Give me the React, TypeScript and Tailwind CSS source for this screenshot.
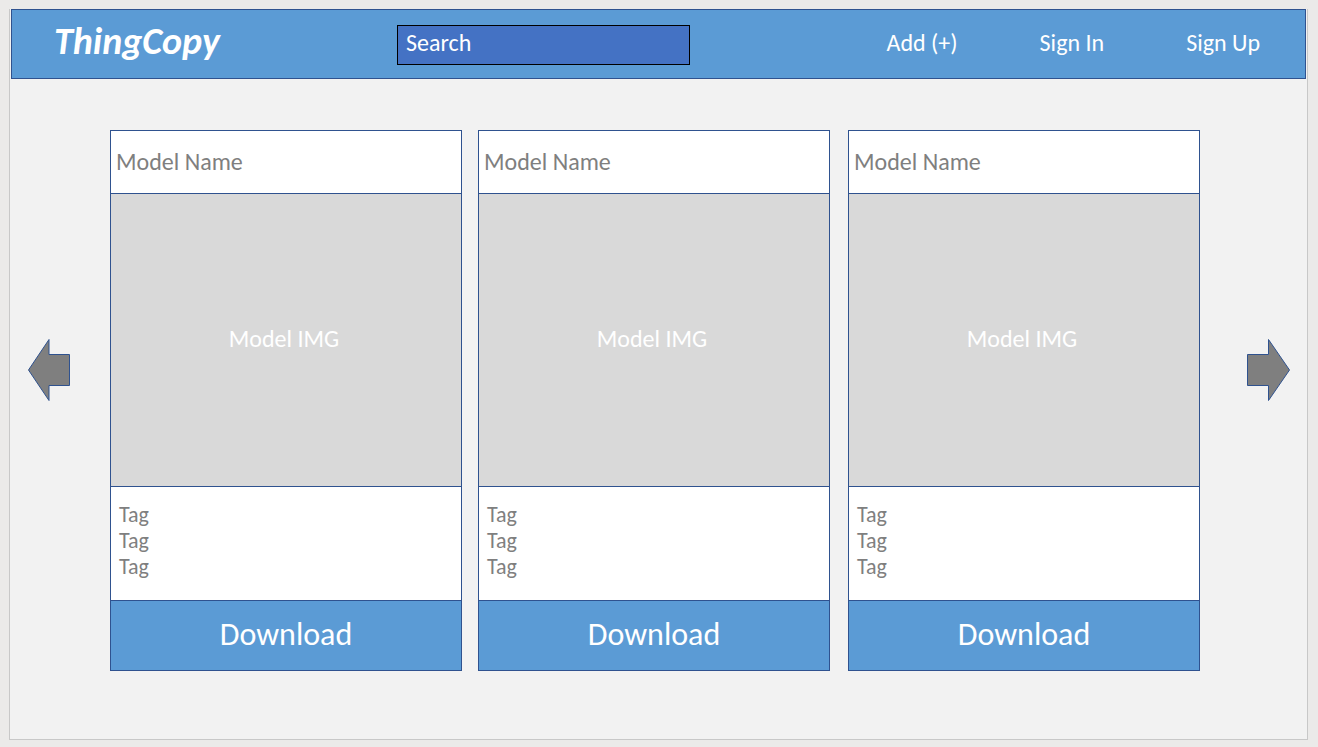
const models = [{ id: 1, gap: "" }, { id: 2, gap: "ml-4" }, { id: 3, gap: "ml-[18px]" }];
const tags = ["Tag", "Tag", "Tag"];

function Arrow({ direction }: { direction: "left" | "right" }) {
  return (
    <svg viewBox="0 0 44 66" className="block w-[44px] h-[66px]" aria-hidden="true">
      <path
        d={direction === "left" ? "M1.5 33 22 2.500V17.500H42.500V48.500H22V63.500Z" : "M43.500 33 22.500 2.500V17.500H1.500V48.500H22.500V63.500Z"}
        fill="#7f7f7f"
        stroke="#2f528f"
        strokeWidth="1"
      />
    </svg>
  );
}

function ModelCard({ gap }: { gap: string }) {
  return (
    <article className={`flex flex-1 flex-col ${gap}`}>
      <div className="border border-[#2f528f] bg-white">
        <h2 className="flex h-[62px] items-center px-[5px] text-[24px] text-[#7f7f7f]">Model Name</h2>
        <div className="flex h-[294px] items-center justify-center border-y border-[#2f528f] bg-[#d9d9d9] pr-1 pb-0.5 text-[24px] text-white">
          Model IMG
        </div>
        <ul className="h-[113px] px-2 pt-[15px] text-[22px] leading-[26px] text-[#7f7f7f]">
          {tags.map((tag, i) => <li key={i}>{tag}</li>)}
        </ul>
      </div>
      <button type="button" className="-mt-px h-[71px] border border-[#2f528f] bg-[#5b9bd5] pb-0.5 text-[32px] text-white">
        Download
      </button>
    </article>
  );
}

export default function App() {
  return (
    <div className="min-h-screen bg-[#ebeae9] pt-[9px] pr-[10px] pb-[7px] pl-[9px] font-['Carlito','Lato',sans-serif]">
      <div className="flex min-h-[731px] flex-col border border-t-0 border-[#c8c8c8] bg-[#f2f2f2]">
        <header className="mx-px flex h-[70px] items-center border border-[#2f528f] bg-[#5b9bd5] pl-[42px] pr-[45px] text-[24px] text-white">
          <a href="#" className="w-[343px] pb-1.5 text-[38px] font-bold italic">ThingCopy</a>
          <input aria-label="Search" placeholder="Search" className="mt-0.5 h-10 w-[293px] border border-black bg-[#4472c4] px-2 pb-1.5 text-white placeholder:text-white" />
          <nav className="ml-auto flex gap-[82px] pb-0.5">
            <a href="#">Add (+)</a>
            <a href="#">Sign In</a>
            <a href="#">Sign Up</a>
          </nav>
        </header>
        <main className="flex px-[17px] pt-[51px]">
          <button type="button" aria-label="Previous" className="mt-[207px] mr-[39px] self-start"><Arrow direction="left" /></button>
          <div className="flex flex-1">
            {models.map((m) => <ModelCard key={m.id} gap={m.gap} />)}
          </div>
          <button type="button" aria-label="Next" className="mt-[207px] ml-[46px] self-start"><Arrow direction="right" /></button>
        </main>
      </div>
    </div>
  );
}
